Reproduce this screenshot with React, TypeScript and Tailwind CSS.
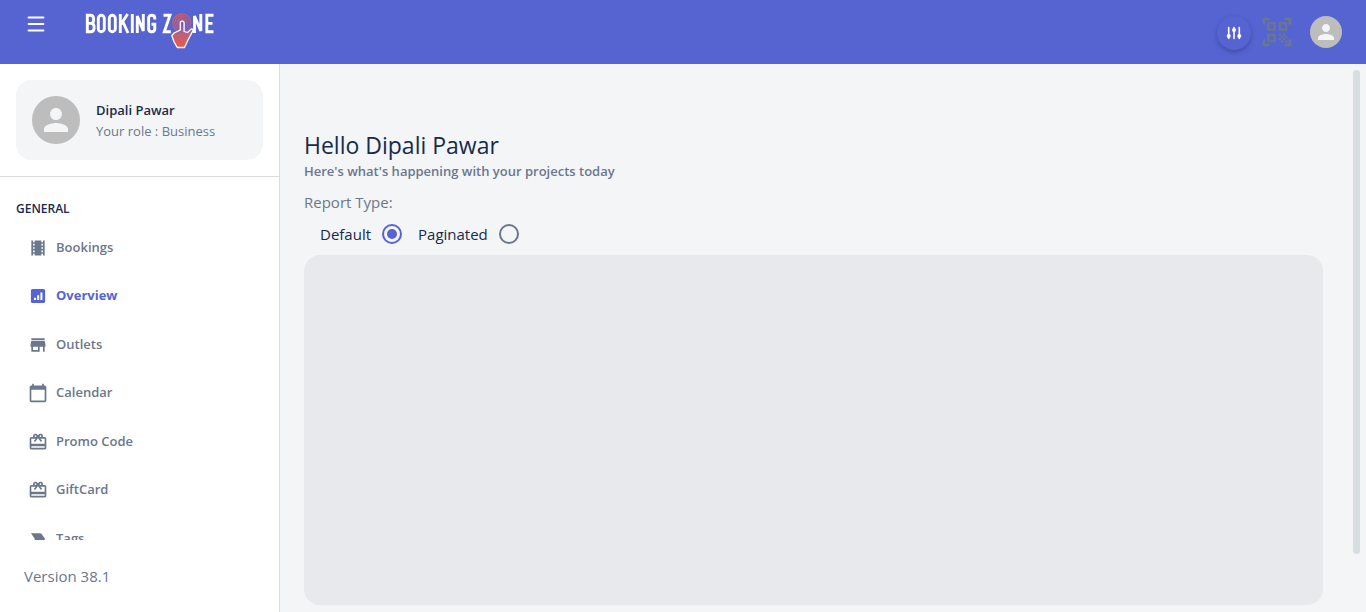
import type { ReactNode } from "react";
import { MdTheaters, MdStore, MdCalendarToday, MdRedeem, MdLabelImportant, MdPerson } from "react-icons/md";

function OverviewIcon() {
  return (
    <svg viewBox="0 0 24 24" className="size-5" fill="currentColor" aria-hidden="true">
      <path fillRule="evenodd" d="M5.500 3.500h13a2 2 0 0 1 2 2v13a2 2 0 0 1-2 2h-13a2 2 0 0 1-2-2v-13a2 2 0 0 1 2-2zM7.200 14v2.800h2.400V14zM11 11.200v5.600h2.400v-5.600zM14.900 7.800v9h2.400v-9z" />
    </svg>
  );
}

function Logo() {
  return (
    <svg viewBox="0 0 130 40" className="h-10 w-[130px]" role="img" aria-label="Booking Zone">
      <defs>
        <linearGradient id="hand" x1="0" y1="0" x2="0" y2="1">
          <stop offset="0" stopColor="#6a62c4" />
          <stop offset="0.500" stopColor="#b9617f" />
          <stop offset="1" stopColor="#f0593f" />
        </linearGradient>
        <linearGradient id="rings" x1="0" y1="0" x2="1" y2="1">
          <stop offset="0" stopColor="#ee5a45" />
          <stop offset="1" stopColor="#8a62ac" />
        </linearGradient>
      </defs>
      <g fill="none" stroke="#fff" strokeWidth="2.900">
        <path d="M2.300 6.300v16.400h3.200c2.600 0 3.600-1.300 3.600-3.800v-.9c0-2-.9-3.600-3.200-3.600H2.500h3.200c2 0 2.900-1.200 2.900-3.200v-1.200c0-2.400-1-3.700-3.300-3.700z" />
        <rect x="13.300" y="6.300" width="6" height="16.400" rx="3" />
        <rect x="24.300" y="6.300" width="6" height="16.400" rx="3" />
        <path d="M35.300 5v19M42.600 5l-6.500 10M37.800 12.500l5.200 11.500M47.300 5v19M52.300 24V7l6 15V5M69.800 10.500V9.300c0-2-1.200-3-3-3-2 0-3.200 1-3.200 3v10.400c0 2 1.200 3 3.200 3 1.800 0 3-1 3-3v-4.400H66.500M78.500 6.300h6.500L79.300 22.700h6.500M109.500 24V7l6.300 15V5M128.500 6.300h-6.700v16.400h6.700M122 14.400h5.500" />
      </g>
      <g fill="none" stroke="url(#rings)" strokeWidth="1.200">
        <circle cx="97" cy="14" r="9.200" />
        <circle cx="97" cy="14" r="7.200" />
        <circle cx="97" cy="14" r="5.200" />
        <circle cx="97" cy="14" r="3.200" />
      </g>
      <path d="M95.300 14c0-2.600 3.800-2.600 3.800 0v8.500l3.400 1 3.300-3.100c1.400-1 2.600.1 1.900 1.700L102.500 32l-3 6.500h-7.200l-3.200-5.500-2.300-6.500 2.300-2.500 6.200-3z" fill="url(#hand)" stroke="#fff" strokeWidth="1.300" strokeLinejoin="round" />
    </svg>
  );
}

function Avatar({ large = false }: { large?: boolean }) {
  return (
    <span className={`flex shrink-0 items-center justify-center rounded-full bg-[#bdbdbd] text-[#f4f5f7] ${large ? "size-12" : "size-8"}`}>
      <MdPerson className={large ? "size-9" : "size-6"} />
    </span>
  );
}

const items: { label: string; icon: ReactNode; active?: boolean }[] = [
  { label: "Bookings", icon: <MdTheaters className="size-5" /> },
  { label: "Overview", icon: <OverviewIcon />, active: true },
  { label: "Outlets", icon: <MdStore className="size-5" /> },
  { label: "Calendar", icon: <MdCalendarToday className="size-5" /> },
  { label: "Promo Code", icon: <MdRedeem className="size-5" /> },
  { label: "GiftCard", icon: <MdRedeem className="size-5" /> },
  { label: "Tags", icon: <MdLabelImportant className="size-5" /> },
];

function Header() {
  return (
    <header className="flex h-16 shrink-0 items-start bg-[#5664d2] pr-6">
      <button type="button" aria-label="Toggle menu" className="mt-3 ml-6 flex size-6 items-center justify-center text-white">
        <svg viewBox="0 0 24 24" className="size-6" stroke="currentColor" strokeWidth="2.200" strokeLinecap="round" aria-hidden="true">
          <path d="M4.700 5.500h14.600M4.700 12h14.600M4.700 18.500h14.600" />
        </svg>
      </button>
      <a href="#home" className="mt-[9px] ml-[37px]"><Logo /></a>
      <div className="ml-auto flex h-16 items-center">
        <button type="button" aria-label="Settings" className="mt-[2px] flex size-[34px] items-center justify-center rounded-full bg-[#5664d2] text-white shadow-[0_2px_5px_rgba(0,0,0,0.25)]">
          <svg viewBox="0 0 16 16" className="size-4" fill="currentColor" stroke="currentColor" strokeWidth="1.600" strokeLinecap="round" aria-hidden="true">
            <path d="M2.700 2.500v11M8 2.500v11M13.300 2.500v11" />
            <circle cx="2.700" cy="11" r="1.200" /><circle cx="8" cy="5" r="1.200" /><circle cx="13.300" cy="11" r="1.200" />
          </svg>
        </button>
        <button type="button" aria-label="Scan code" className="ml-[11px] text-[#6b778c]">
          <svg viewBox="0 0 30 30" className="size-[30px]" aria-hidden="true">
            <g fill="none" stroke="currentColor" strokeWidth="2.600">
              <path d="M2 7.500V2h5.500M22.500 2H28v5.500M28 22.500V28h-5.500M7.500 28H2v-5.500" />
              <path d="M6.300 6.300h6.400v6.400H6.300zM17.800 6.300h6.400v6.400h-6.400zM6.300 17.800h6.400v6.400H6.300z" strokeWidth="2.200" />
            </g>
            <path fill="currentColor" d="M16.700 16.700h2.200v2.200h-2.200zM21.100 16.700h2.200v2.200h-2.200zM18.900 18.900h2.200v2.200h-2.200zM23.300 18.900h2.200v2.200h-2.200zM16.700 21.100h2.200v2.200h-2.200zM21.100 21.100h2.200v2.200h-2.200zM18.900 23.300h2.200v2.200h-2.200zM23.300 23.300h2.200v2.200h-2.200z" />
          </svg>
        </button>
        <button type="button" aria-label="Account" className="ml-[18px]"><Avatar /></button>
      </div>
    </header>
  );
}

function Sidebar() {
  return (
    <aside className="flex w-[280px] shrink-0 flex-col border-r border-[#dcdcdc] bg-white">
      <div className="border-b border-[#dcdcdc] p-4">
        <div className="flex h-20 items-center gap-4 rounded-2xl bg-[#f4f5f7] px-4">
          <Avatar large />
          <div className="pt-[2px]">
            <p className="text-[13px] leading-[21px] font-semibold text-[#172b4d]">Dipali Pawar</p>
            <p className="text-[13px] leading-[21px] text-[#6b778c]">Your role : Business</p>
          </div>
        </div>
      </div>
      <nav className="min-h-0 flex-1 overflow-hidden px-4 pt-4">
        <h2 className="text-[12px] leading-8 font-semibold text-[#172b4d]">GENERAL</h2>
        <ul className="mt-1 flex h-[328px] flex-col justify-between">
          {items.map((item) => (
            <li key={item.label}>
              <a href="#section" className={`flex h-[37px] items-center gap-2 pl-3 text-[13px] ${item.active ? "font-bold text-[#5664d2]" : "font-semibold text-[#6b778c]"}`}>
                {item.icon}
                {item.label}
              </a>
            </li>
          ))}
        </ul>
      </nav>
      <p className="shrink-0 px-6 py-6 text-[15px] leading-6 text-[#6b778c]">Version 38.1</p>
    </aside>
  );
}

function Choice({ label, checked }: { label: string; checked?: boolean }) {
  return (
    <label className="flex items-center gap-[11px] text-[15px] leading-6 text-[#172b4d]">
      {label}
      <input
        type="radio"
        name="report-type"
        defaultChecked={checked}
        className="size-5 appearance-none rounded-full border-2 border-[#6b778c] bg-clip-content p-[3px] checked:border-[#5664d2] checked:bg-[#5664d2]"
      />
    </label>
  );
}

export default function App() {
  return (
    <div className="flex h-screen flex-col overflow-hidden bg-[#f4f5f7] font-['Open_Sans','Noto_Sans',sans-serif]">
      <Header />
      <div className="flex min-h-0 flex-1">
        <Sidebar />
        <main className="flex min-w-0 flex-1 flex-col pt-[63px] pr-[30px] pb-[7px] pl-6">
          <h1 className="text-[23px] leading-9 font-medium text-[#172b4d]">Hello Dipali Pawar</h1>
          <p className="text-[13px] leading-4 font-semibold text-[#6b778c]">Here's what's happening with your projects today</p>
          <fieldset className="mt-[11px] pb-px">
            <legend className="text-[15px] leading-6 text-[#6b778c]">Report Type:</legend>
            <div className="flex h-10 items-center gap-4 pl-4">
              <Choice label="Default" checked />
              <Choice label="Paginated" />
            </div>
          </fieldset>
          <section aria-label="Report" className="flex-1 rounded-2xl bg-[#e8e9ec]" />
        </main>
        <div className="w-[13px] shrink-0 pt-[6px]">
          <div className="h-[484px] w-[7px] rounded-full bg-[#d6dee1]" />
        </div>
      </div>
    </div>
  );
}
